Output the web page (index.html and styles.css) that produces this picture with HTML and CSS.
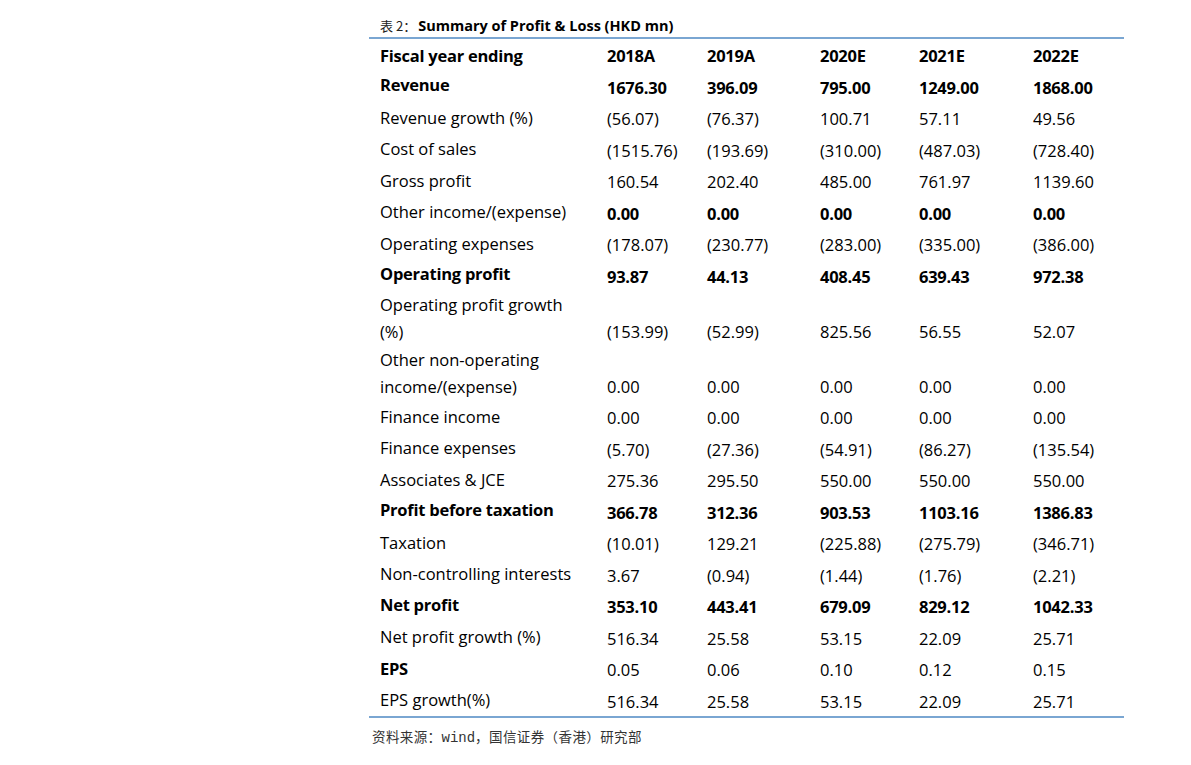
FILE: index.html
```html
<!DOCTYPE html>
<html lang="zh-CN">
<head>
<meta charset="utf-8">
<title>Summary of Profit &amp; Loss</title>
<link rel="stylesheet" href="styles.css">
</head>
<body>
<div class="report">
  <div class="caption"><span class="cap-no">表 2：</span><span class="cap-text">Summary of Profit &amp; Loss (HKD mn)</span></div>
  <div class="table">
    <div class="row bold head"><div class="lbl">Fiscal year ending</div><div class="num">2018A</div><div class="num">2019A</div><div class="num">2020E</div><div class="num">2021E</div><div class="num">2022E</div></div>
    <div class="row bold"><div class="lbl">Revenue</div><div class="num">1676.30</div><div class="num">396.09</div><div class="num">795.00</div><div class="num">1249.00</div><div class="num">1868.00</div></div>
    <div class="row"><div class="lbl">Revenue growth (%)</div><div class="num">(56.07)</div><div class="num">(76.37)</div><div class="num">100.71</div><div class="num">57.11</div><div class="num">49.56</div></div>
    <div class="row"><div class="lbl">Cost of sales</div><div class="num">(1515.76)</div><div class="num">(193.69)</div><div class="num">(310.00)</div><div class="num">(487.03)</div><div class="num">(728.40)</div></div>
    <div class="row"><div class="lbl">Gross profit</div><div class="num">160.54</div><div class="num">202.40</div><div class="num">485.00</div><div class="num">761.97</div><div class="num">1139.60</div></div>
    <div class="row numbold"><div class="lbl">Other income/(expense)</div><div class="num">0.00</div><div class="num">0.00</div><div class="num">0.00</div><div class="num">0.00</div><div class="num">0.00</div></div>
    <div class="row"><div class="lbl">Operating expenses</div><div class="num">(178.07)</div><div class="num">(230.77)</div><div class="num">(283.00)</div><div class="num">(335.00)</div><div class="num">(386.00)</div></div>
    <div class="row bold"><div class="lbl">Operating profit</div><div class="num">93.87</div><div class="num">44.13</div><div class="num">408.45</div><div class="num">639.43</div><div class="num">972.38</div></div>
    <div class="row tall"><div class="lbl">Operating profit growth<br>(%)</div><div class="num">(153.99)</div><div class="num">(52.99)</div><div class="num">825.56</div><div class="num">56.55</div><div class="num">52.07</div></div>
    <div class="row tall"><div class="lbl">Other non-operating<br>income/(expense)</div><div class="num">0.00</div><div class="num">0.00</div><div class="num">0.00</div><div class="num">0.00</div><div class="num">0.00</div></div>
    <div class="row"><div class="lbl">Finance income</div><div class="num">0.00</div><div class="num">0.00</div><div class="num">0.00</div><div class="num">0.00</div><div class="num">0.00</div></div>
    <div class="row"><div class="lbl">Finance expenses</div><div class="num">(5.70)</div><div class="num">(27.36)</div><div class="num">(54.91)</div><div class="num">(86.27)</div><div class="num">(135.54)</div></div>
    <div class="row"><div class="lbl">Associates &amp; JCE</div><div class="num">275.36</div><div class="num">295.50</div><div class="num">550.00</div><div class="num">550.00</div><div class="num">550.00</div></div>
    <div class="row bold"><div class="lbl">Profit before taxation</div><div class="num">366.78</div><div class="num">312.36</div><div class="num">903.53</div><div class="num">1103.16</div><div class="num">1386.83</div></div>
    <div class="row"><div class="lbl">Taxation</div><div class="num">(10.01)</div><div class="num">129.21</div><div class="num">(225.88)</div><div class="num">(275.79)</div><div class="num">(346.71)</div></div>
    <div class="row"><div class="lbl">Non-controlling interests</div><div class="num">3.67</div><div class="num">(0.94)</div><div class="num">(1.44)</div><div class="num">(1.76)</div><div class="num">(2.21)</div></div>
    <div class="row bold"><div class="lbl">Net profit</div><div class="num">353.10</div><div class="num">443.41</div><div class="num">679.09</div><div class="num">829.12</div><div class="num">1042.33</div></div>
    <div class="row"><div class="lbl">Net profit growth (%)</div><div class="num">516.34</div><div class="num">25.58</div><div class="num">53.15</div><div class="num">22.09</div><div class="num">25.71</div></div>
    <div class="row lblbold"><div class="lbl">EPS</div><div class="num">0.05</div><div class="num">0.06</div><div class="num">0.10</div><div class="num">0.12</div><div class="num">0.15</div></div>
    <div class="row"><div class="lbl">EPS growth(%)</div><div class="num">516.34</div><div class="num">25.58</div><div class="num">53.15</div><div class="num">22.09</div><div class="num">25.71</div></div>
  </div>
  <div class="source">资料来源：<span class="latin">wind</span>，国信证券（香港）研究部</div>
</div>
</body>
</html>
```

FILE: styles.css
```css
html, body {
  margin: 0;
  padding: 0;
  background: #ffffff;
}

.report {
  width: 755px;
  margin-left: 369px;
  padding-top: 16px;
  color: #000;
}

.caption {
  padding-left: 11px;
  line-height: 19px;
  font-size: 14.5px;
  border-bottom: 2px solid #7aa6d2;
  box-sizing: border-box;
  height: 23px;
}

.cap-no {
  font-family: "Noto Sans CJK SC", "DejaVu Sans", sans-serif;
  font-weight: 400;
  font-size: 13px;
  color: #222;
  margin-right: 2px;
}

.cap-text {
  font-family: "Open Sans", "Noto Sans", sans-serif;
  font-weight: 700;
  letter-spacing: 0;
}

.table {
  border-bottom: 2px solid #7aa6d2;
  font-family: "Open Sans", "Noto Sans", sans-serif;
  font-size: 16.5px;
  letter-spacing: 0;
}

.row {
  display: grid;
  grid-template-columns: 238px 100px 113px 99px 114px 1fr;
  height: 31.5px;
}

.row.tall {
  height: 55px;
}

.lbl {
  padding-left: 11px;
  line-height: 27px;
  padding-top: 1.5px;
  align-self: start;
}

.row.tall .lbl {
  padding-top: 0;
}

.num {
  line-height: 27px;
  padding-bottom: 1.5px;
  align-self: end;
}

.bold .lbl,
.bold .num,
.numbold .num,
.lblbold .lbl {
  font-weight: 700;
  letter-spacing: -0.25px;
}

.bold .lbl {
  padding-top: 0.5px;
}

.head .lbl {
  padding-top: 2.5px;
}

.source {
  margin-top: 8px;
  padding-left: 3px;
  font-family: "Noto Sans CJK SC", sans-serif;
  font-size: 13.5px;
  color: #333;
  letter-spacing: 0.4px;
}

.source .latin {
  font-family: "Liberation Mono", monospace;
  font-size: 14px;
  letter-spacing: 0;
}
```
